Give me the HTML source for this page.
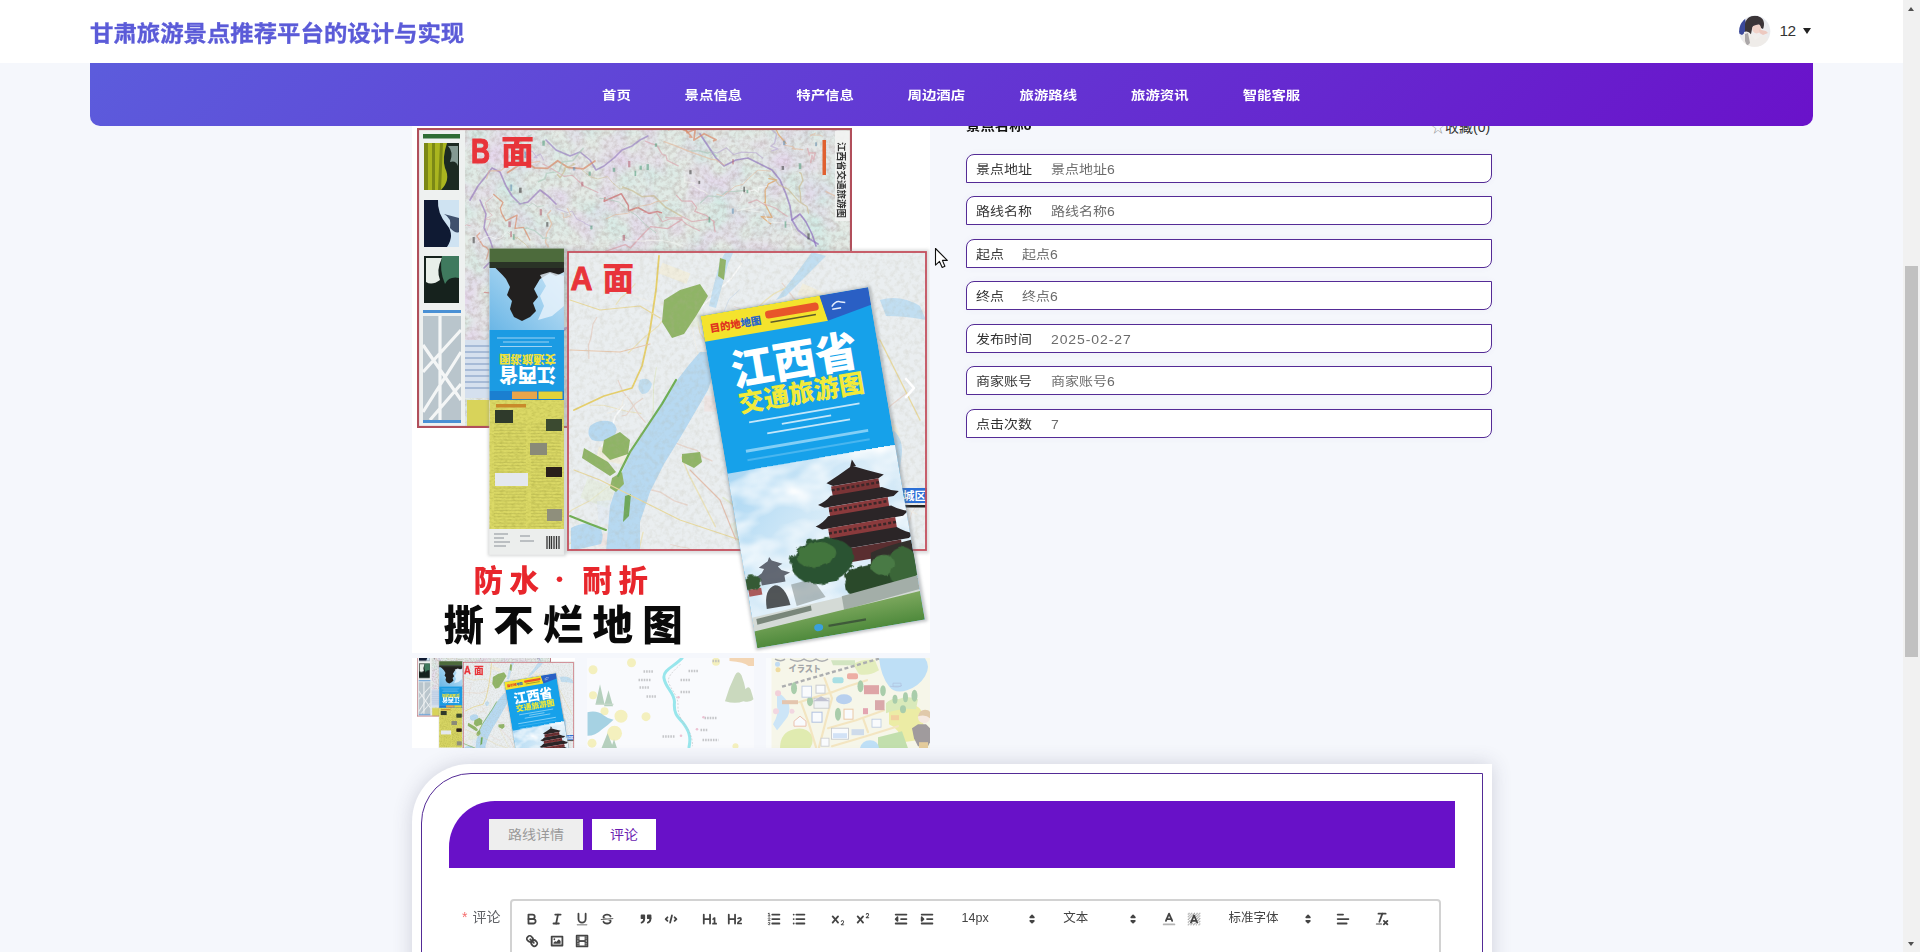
<!DOCTYPE html>
<html lang="zh-CN">
<head>
<meta charset="utf-8">
<title>甘肃旅游景点推荐平台的设计与实现</title>
<style>
*{box-sizing:border-box;margin:0;padding:0}
html,body{width:1920px;height:952px;overflow:hidden;background:#f5f7fc}
body{font-family:"Liberation Sans","Noto Sans CJK SC",sans-serif;font-size:14px;color:#333;position:relative}
#app{position:absolute;left:0;top:0;width:1920px;height:952px;overflow:hidden;background:#f5f7fc}
.abs{position:absolute}
/* header */
#head{position:absolute;left:0;top:0;width:1903px;height:63px;background:#fff;z-index:30}
#title{position:absolute;left:90px;top:15.2px;height:36px;line-height:36px;font-size:23.4px;font-weight:700;color:#5b5bd8;white-space:nowrap;letter-spacing:0;transform:scaleY(.94);transform-origin:50% 50%;-webkit-text-stroke:.35px #5b5bd8}
#user{position:absolute;left:1739px;top:15.3px;height:32px}
#uname{position:absolute;left:1779.5px;top:19.6px;font-size:15.4px;line-height:22px;color:#333;letter-spacing:-.6px}
#caret{position:absolute;left:1802.6px;top:28px;width:0;height:0;border-left:4.4px solid transparent;border-right:4.4px solid transparent;border-top:6.6px solid #222}
/* nav */
#nav{position:absolute;left:90px;top:63px;width:1723px;height:63px;border-radius:0 0 10px 10px;background:linear-gradient(135deg,#5c5cdc 0%,#6a12ca 100%);z-index:20}
#nav span{position:absolute;top:1.9px;height:63px;line-height:63px;color:#fff;font-size:14.4px;font-weight:700;white-space:nowrap;transform:scaleY(.86);transform-origin:50% 50%}
/* info */
.row{position:absolute;left:966px;width:526px;height:29px;border:1px solid #542b96;border-radius:8px 0 8px 0;background:#fff;line-height:27px;font-size:14px;white-space:nowrap;box-shadow:0 0 6px rgba(120,100,180,.06)}
.row b{font-weight:400;color:#333;position:absolute;left:9px;top:.8px;transform:scaleY(.89)}
.row i{font-style:normal;color:#6b6b6b;position:absolute;top:.8px;margin-left:-1px;transform:scaleY(.89)}
/* panel */
#panel{position:absolute;left:412px;top:764px;width:1080px;height:260px;background:#fff;border-radius:58px 0 0 0;box-shadow:0 0 20px rgba(60,60,90,.2)}
#pin{position:absolute;left:9px;top:9px;width:1062px;height:260px;border:1px solid #542b96;border-radius:50px 0 0 0}
#band{position:absolute;left:449px;top:801px;width:1006px;height:67px;background:#6811c8;border-radius:46px 0 0 0}
.tab{position:absolute;top:819px;height:31px;line-height:31px;text-align:center;font-size:14px}
.tab span{display:inline-block;transform:scaleY(.9)}
</style>
</head>
<body>
<div id="app">

<div id="head">
  <div id="title">甘肃旅游景点推荐平台的设计与实现</div>
  <svg id="user" width="32" height="32" viewBox="0 0 32 32">
    <defs><clipPath id="avc"><circle cx="15.7" cy="16.2" r="15.6"/></clipPath>
    <radialGradient id="avg" cx="50%" cy="75%" r="75%"><stop offset="0" stop-color="#f3efec"/><stop offset="1" stop-color="#e6e9ef"/></radialGradient>
    <filter id="avb" x="-20%" y="-20%" width="140%" height="140%"><feGaussianBlur stdDeviation="0.7"/></filter></defs>
    <g clip-path="url(#avc)">
      <rect width="32" height="32" fill="url(#avg)"/>
      <g filter="url(#avb)">
      <path d="M-1 8 L6 3 L8 16 L3 20 L-1 18Z" fill="#3b489a"/>
      <path d="M6 10 C6 2 15 -1 21 2 C25 4 26 9 24 14 L22 13 L20 9 C17 8 14 10 13 14 L12 19 L9 21 L6 18Z" fill="#3a3439"/>
      <path d="M5 17 C9 15 12 19 14 22 L16 25 L22 21 L28 22 L30 32 L4 32 Z" fill="#efece9"/>
      <ellipse cx="17.6" cy="13.6" rx="4.4" ry="4.8" fill="#f1d3ca"/>
      <path d="M12.5 12 C14 7 19 6.500 23 9.500 C20 9 16 10 12.500 12Z" fill="#3d363b"/>
      <path d="M20 14.500 L27 16 L29 18 L24 20 L20.500 18Z" fill="#edc9c0"/>
      <path d="M6 19 L9 18 L11 28 L8 31 L6 26Z" fill="#8e8a8c" opacity=".7"/>
      </g>
    </g>
  </svg>
  <div id="uname">12</div>
  <div id="caret"></div>
</div>

<div id="nav">
  <span style="left:512px">首页</span>
  <span style="left:594.6px">景点信息</span>
  <span style="left:706.3px">特产信息</span>
  <span style="left:817.5px">周边酒店</span>
  <span style="left:929.5px">旅游路线</span>
  <span style="left:1041px">旅游资讯</span>
  <span style="left:1152.7px">智能客服</span>
</div>

<svg class="abs" style="left:412px;top:110px;z-index:1" width="518" height="543" viewBox="412 110 518 543">
<g id="mimg">
<defs>
<filter id="mtexB" x="0" y="0" width="100%" height="100%" color-interpolation-filters="sRGB"><feTurbulence type="fractalNoise" baseFrequency="0.22" numOctaves="3" seed="5"/><feColorMatrix type="matrix" values="0 0 0 0 0.60  0 0 0 0 0.52  0 0 0 0 0.50  1.6 0 0 0 -0.62"/></filter>
<filter id="mtexB2" x="0" y="0" width="100%" height="100%" color-interpolation-filters="sRGB"><feTurbulence type="fractalNoise" baseFrequency="0.035" numOctaves="2" seed="11"/><feColorMatrix type="matrix" values="0 0 0 0 0.90  0 0 0 0 0.85  0 0 0 0 0.93  0 2.2 0 0 -0.9"/></filter>
<filter id="mtexG" x="0" y="0" width="100%" height="100%" color-interpolation-filters="sRGB"><feTurbulence type="fractalNoise" baseFrequency="0.03" numOctaves="2" seed="23"/><feColorMatrix type="matrix" values="0 0 0 0 0.83  0 0 0 0 0.92  0 0 0 0 0.90  0 0 2.4 0 -0.95"/></filter>
<filter id="mtexA" x="0" y="0" width="100%" height="100%" color-interpolation-filters="sRGB"><feTurbulence type="fractalNoise" baseFrequency="0.2" numOctaves="3" seed="9"/><feColorMatrix type="matrix" values="0 0 0 0 0.70  0 0 0 0 0.68  0 0 0 0 0.60  1.5 0 0 0 -0.62"/></filter>
<filter id="mtexY" x="0" y="0" width="100%" height="100%" color-interpolation-filters="sRGB"><feTurbulence type="fractalNoise" baseFrequency="0.25 0.5" numOctaves="2" seed="4"/><feColorMatrix type="matrix" values="0 0 0 0 0.45  0 0 0 0 0.45  0 0 0 0 0.1  1.4 0 0 0 -0.55"/></filter>
<filter id="mcloud" x="0" y="0" width="100%" height="100%" color-interpolation-filters="sRGB"><feTurbulence type="fractalNoise" baseFrequency="0.02 0.035" numOctaves="3" seed="8"/><feColorMatrix type="matrix" values="0 0 0 0 1  0 0 0 0 1  0 0 0 0 1  2.6 0 0 0 -1.0"/></filter>
<filter id="mtree" x="-10%" y="-10%" width="120%" height="120%"><feTurbulence type="fractalNoise" baseFrequency="0.12" numOctaves="2" seed="3" result="n"/><feDisplacementMap in="SourceGraphic" in2="n" scale="7"/></filter>
<filter id="mblur1"><feGaussianBlur stdDeviation="0.6"/></filter>
<filter id="mblur2"><feGaussianBlur stdDeviation="1.6"/></filter>
<linearGradient id="msky" x1="0" y1="0" x2="1" y2="1"><stop offset="0" stop-color="#a9d6f3"/><stop offset="0.45" stop-color="#d9ecf8"/><stop offset="1" stop-color="#c3e0f4"/></linearGradient>
<linearGradient id="mbsky" x1="0" y1="1" x2="1" y2="0"><stop offset="0" stop-color="#6ab6e6"/><stop offset="1" stop-color="#cfe8f8"/></linearGradient>
<linearGradient id="mlawn" x1="0" y1="0" x2="0" y2="1"><stop offset="0" stop-color="#7da85e"/><stop offset="1" stop-color="#4f8a3c"/></linearGradient>
<clipPath id="mclipB"><rect x="417" y="128" width="435" height="300"/></clipPath>
<clipPath id="mclipA"><rect x="567" y="251" width="360" height="300"/></clipPath>
<clipPath id="mclipC"><rect x="0" y="0" width="170" height="337"/></clipPath>
</defs>
<rect x="400" y="100" width="540" height="560" fill="#fff"/>
<g clip-path="url(#mclipB)">
<rect x="417" y="128" width="435" height="300" fill="#e6ebe6"/>
<rect x="465" y="130" width="386" height="296" fill="#e4ebe6"/>
<rect x="465" y="130" width="386" height="296" filter="url(#mtexG)"/>
<rect x="465" y="130" width="386" height="296" filter="url(#mtexB2)"/>
<rect x="465" y="130" width="386" height="296" filter="url(#mtexB)" opacity="0.45"/>
<g fill="none" stroke-linejoin="round" stroke-linecap="round" filter="url(#mblur1)">
<polyline points="470,200 478,186 486,176 492,168 500,172 506,186 512,196 520,204 528,202 534,196 540,190 548,196 556,204" stroke="#9a7cbd" stroke-width="1.700" opacity=".7"/>
<polyline points="480,200 486,214 484,228 490,240 494,252 490,262 484,268" stroke="#9a7cbd" stroke-width="1.600" opacity=".7"/>
<polyline points="546,140 556,150 570,156 580,152 590,160 596,170 604,166 614,158 622,150 632,146 640,140 648,136" stroke="#957cc0" stroke-width="1.600" opacity=".65"/>
<polyline points="700,134 708,146 716,158 724,166 736,160 748,158 760,164 772,170 780,180 786,194 790,206 792,220 798,230 808,238 818,244" stroke="#9278bd" stroke-width="1.700" opacity=".7"/>
<polyline points="792,220 800,214 806,222 812,234 816,246" stroke="#8c6bbd" stroke-width="1.6" opacity=".7"/>
<polyline points="689.5,137.1 692.0,137.2 686.5,131.0 682.2,129.3 668.5,125.5 663.1,128.3 668.8,118.2 656.1,120.5 649.8,110.6" stroke="#d98a6a" stroke-width="1.5" opacity=".7"/>
<polyline points="783.2,140.5 786.1,143.4 778.4,134.5 773.6,123.4 772.7,123.2 770.0,120.8 766.6,105.6 765.0,106.7 766.6,97.4" stroke="#e0a060" stroke-width="1.2" opacity=".7"/>
<polyline points="676.5,195.3 681.6,200.8 691.7,201.1 696.7,207.5 694.7,211.4 706.4,215.5 714.4,222.4 713.3,220.5 715.1,231.8" stroke="#d9a0a8" stroke-width="1.2" opacity=".7"/>
<polyline points="682.0,219.5 667.8,228.6 650.6,226.6 644.2,233.0 630.4,248.0 625.2,244.6 604.6,251.7 602.5,255.1 584.1,262.0" stroke="#d9a0a8" stroke-width="1.3" opacity=".7"/>
<polyline points="529.9,240.0 523.5,227.4 515.0,228.4 517.1,215.1 505.7,220.8 501.5,213.1 500.3,208.1 503.0,202.5 493.7,194.5" stroke="#d98a6a" stroke-width="1.3" opacity=".7"/>
<polyline points="594.9,161.0 583.6,168.8 567.6,167.3 557.6,160.7 547.5,168.4 534.8,167.9 527.0,162.7 517.6,165.9 507.7,172.5" stroke="#d98a6a" stroke-width="1.8" opacity=".7"/>
<polyline points="605.0,197.8 604.1,201.3 621.2,193.7 628.4,205.7 628.4,210.7 637.9,207.5 648.8,213.4 657.3,211.5 661.6,212.8" stroke="#c96a6a" stroke-width="1.5" opacity=".7"/>
<polyline points="713.6,140.8 716.1,139.8 704.1,133.7 693.9,140.1 695.2,129.2 687.1,132.8 684.7,125.7 671.5,122.7 668.7,129.6" stroke="#d98a6a" stroke-width="1.7" opacity=".7"/>
<polyline points="768.8,178.7 776.8,179.8 768.5,183.8 765.1,190.3 765.5,204.2 764.3,202.5 772.1,217.5 761.2,216.6 770.7,223.7" stroke="#e0a060" stroke-width="1.3" opacity=".7"/>
<polyline points="484.3,292.4 496.8,293.8 504.1,297.0 501.4,300.7 508.8,298.4 515.7,304.9 520.7,310.8" stroke="#c96a6a" stroke-width="1.4" opacity=".6"/>
<polyline points="522.8,339.1 518.8,338.1 522.9,341.7 516.6,341.8 513.0,342.4 511.2,334.7 507.4,337.6" stroke="#9a70bd" stroke-width="1.4" opacity=".6"/>
<polyline points="561.7,360.2 558.9,358.2 562.3,368.4 560.6,369.7 557.5,368.9 559.9,371.1 564.7,377.1" stroke="#d98a6a" stroke-width="1.4" opacity=".6"/>
<polyline points="486.5,258.9 489.2,249.5 488.5,250.2 486.5,247.3 483.0,245.8 476.8,235.9 479.8,233.1" stroke="#d98a6a" stroke-width="1.4" opacity=".6"/>
<polyline points="551.2,342.3 555.9,338.9 557.8,337.1 562.9,331.5 568.5,326.8 562.4,329.0 574.5,327.0" stroke="#9a70bd" stroke-width="1.4" opacity=".6"/>
<polyline points="505.0,407.7 505.4,402.3 507.8,396.5 508.7,396.2 499.4,395.3 500.1,394.5 504.2,383.7" stroke="#d98a6a" stroke-width="1.4" opacity=".6"/>
</g>
<g fill="none" stroke-linejoin="round" stroke-linecap="round" opacity=".6">
<polyline points="740.1,197.5 743.3,191.0 749.6,191.0 754.9,189.8 758.0,192.4 758.5,187.8 766.5,186.5" stroke="#ffffff" stroke-width="1.1"/>
<polyline points="548.5,246.8 545.5,242.7 546.5,233.7 549.7,228.2 551.7,223.6 547.3,214.6 550.6,210.7" stroke="#e3b79a" stroke-width="1.4"/>
<polyline points="523.4,148.4 525.8,154.8 532.1,151.0 537.2,157.8 534.1,157.4 540.4,154.1 543.5,160.0" stroke="#b7a6d0" stroke-width="1.1"/>
<polyline points="826.0,191.6 835.6,196.1 850.6,198.6 859.2,208.8 862.5,208.3 876.2,220.0 884.5,223.5" stroke="#e3b79a" stroke-width="1.3"/>
<polyline points="509.2,233.5 516.9,238.6 517.0,237.4 526.5,245.2 530.5,251.1 534.9,249.3 538.2,250.7" stroke="#c9b88a" stroke-width="0.9"/>
<polyline points="622.6,187.0 632.7,190.9 641.9,196.7 653.8,195.8 665.4,207.1 670.0,209.6 681.6,216.3" stroke="#c9b88a" stroke-width="1.5"/>
<polyline points="745.9,190.3 735.0,191.4 726.2,191.6 720.4,197.0 714.7,196.5 708.1,195.9 700.6,202.8" stroke="#a8c8b8" stroke-width="1.2"/>
<polyline points="688.3,151.2 697.3,150.7 696.9,150.2 707.7,153.1 712.6,151.3 716.3,156.3 716.9,155.9" stroke="#a8c8b8" stroke-width="1.4"/>
<polyline points="800.8,202.0 800.2,192.3 799.0,187.0 800.9,184.1 802.9,180.5 801.2,173.6 799.7,172.7" stroke="#c9b88a" stroke-width="1.4"/>
<polyline points="770.7,171.1 757.9,170.1 748.5,178.5 743.0,184.4 735.0,186.4 723.3,196.1 716.8,194.2" stroke="#e3b79a" stroke-width="0.9"/>
<polyline points="645.4,141.2 651.3,143.6 656.6,145.2 662.4,154.7 665.9,155.4 667.2,160.3 678.2,165.9" stroke="#d9a0a8" stroke-width="1.3"/>
<polyline points="807.6,148.6 809.3,155.0 809.6,152.7 815.2,153.0 813.5,159.8 812.0,155.4 810.7,162.6" stroke="#d9a0a8" stroke-width="1.5"/>
<polyline points="737.6,210.5 744.3,208.9 753.3,207.5 751.5,204.8 754.5,207.6 762.7,203.5 767.1,204.6" stroke="#f4f6f2" stroke-width="1.3"/>
<polyline points="622.7,188.5 620.0,189.1 612.2,182.4 607.5,176.5 597.9,179.0 590.2,176.7 581.5,169.5" stroke="#c9b88a" stroke-width="0.8"/>
<polyline points="667.4,200.6 656.3,201.6 650.0,204.5 639.5,206.3 627.7,213.4 615.3,214.7 606.3,218.8" stroke="#e3b79a" stroke-width="1.0"/>
<polyline points="793.1,233.8 790.5,223.4 782.1,222.9 768.2,222.0 764.2,212.5 750.2,210.6 742.9,209.0" stroke="#f4f6f2" stroke-width="1.1"/>
<polyline points="665.7,217.5 671.2,217.9 681.8,217.8 682.3,216.7 692.0,221.7 703.9,219.9 709.2,219.0" stroke="#d9a0a8" stroke-width="1.3"/>
<polyline points="762.8,158.2 756.1,152.8 741.8,152.1 733.5,154.5 726.5,147.8 717.2,153.0 711.2,151.6" stroke="#b7a6d0" stroke-width="1.1"/>
<polyline points="784.2,141.7 783.9,139.1 784.9,145.3 793.1,146.8 795.4,149.4 792.2,148.4 802.7,149.6" stroke="#e3b79a" stroke-width="1.1"/>
<polyline points="591.7,226.6 584.4,223.3 584.5,222.6 576.6,218.9 571.9,211.0 567.6,212.5 556.8,208.7" stroke="#b7a6d0" stroke-width="0.9"/>
<polyline points="538.3,181.8 544.8,178.8 546.5,173.4 559.0,171.4 562.4,162.0 572.7,160.8 583.2,148.2" stroke="#a8c8b8" stroke-width="1.4"/>
<polyline points="664.0,141.6 675.2,145.6 689.4,151.5 699.7,155.1 710.9,159.2 715.7,159.6 724.2,165.0" stroke="#e3b79a" stroke-width="1.4"/>
<polyline points="771.8,150.9 777.8,148.9 770.8,146.0 774.6,143.3 776.6,134.0 770.9,129.0 773.8,128.4" stroke="#b7a6d0" stroke-width="1.4"/>
<polyline points="531.4,134.7 523.7,139.1 520.5,142.0 523.6,150.9 519.1,152.1 518.5,164.9 516.6,166.3" stroke="#a8c8b8" stroke-width="1.1"/>
<polyline points="618.9,237.3 629.2,240.6 644.7,241.1 648.2,240.1 663.1,240.7 673.7,242.8 682.8,246.2" stroke="#f4f6f2" stroke-width="1.1"/>
<polyline points="539.4,161.4 527.7,163.2 520.5,164.7 507.4,165.3 500.9,170.5 488.9,171.0 486.6,178.7" stroke="#e3b79a" stroke-width="1.3"/>
<polyline points="492.7,196.7 485.2,202.8 488.0,211.4 492.4,215.3 485.2,219.0 490.8,220.0 487.1,230.2" stroke="#d9a0a8" stroke-width="0.8"/>
<polyline points="655.7,232.6 645.5,224.9 636.0,215.0 628.1,210.4 619.4,202.2 606.0,198.7 599.8,198.5" stroke="#a8c8b8" stroke-width="1.0"/>
<polyline points="513.7,236.1 506.9,231.6 501.0,237.8 496.9,239.0 489.1,236.1 485.2,237.5 478.0,241.7" stroke="#ffffff" stroke-width="0.9"/>
<polyline points="707.2,194.1 704.5,191.6 700.4,190.2 692.6,185.1 695.0,183.2 684.5,181.6 684.9,175.0" stroke="#f4f6f2" stroke-width="1.3"/>
<polyline points="557.4,174.6 560.3,177.7 563.6,172.3 565.1,168.8 564.4,168.1 574.9,164.4 573.3,163.7" stroke="#c9b88a" stroke-width="1.5"/>
<polyline points="810.0,135.5 813.1,134.4 810.4,136.0 815.5,132.9 813.4,135.3 819.8,135.0 822.4,136.3" stroke="#e3b79a" stroke-width="0.9"/>
<polyline points="542.8,163.9 550.6,168.0 564.2,176.4 572.4,175.3 583.8,186.0 586.5,187.2 597.9,192.4" stroke="#d9a0a8" stroke-width="1.1"/>
<polyline points="524.1,228.7 527.2,228.0 529.6,229.0 534.8,230.7 542.1,236.8 542.4,238.3 547.9,237.8" stroke="#a8c8b8" stroke-width="1.3"/>
<polyline points="470.2,225.7 466.5,224.8 461.7,229.1 455.9,229.3 454.9,232.3 454.6,233.6 445.2,239.4" stroke="#d9a0a8" stroke-width="1.0"/>
<polyline points="787.2,216.2 784.7,214.7 775.5,208.1 767.3,205.0 765.2,205.0 756.5,199.8 748.7,202.8" stroke="#d9a0a8" stroke-width="1.3"/>
<polyline points="543.7,205.7 537.4,206.9 532.7,203.4 528.6,206.0 520.3,202.7 514.5,202.0 510.1,201.6" stroke="#a8c8b8" stroke-width="0.8"/>
<polyline points="699.4,230.7 686.3,224.2 681.1,219.4 670.5,218.6 662.4,221.7 656.0,212.1 643.7,212.5" stroke="#d9a0a8" stroke-width="1.2"/>
<polyline points="561.0,213.1 563.1,213.1 563.5,218.1 569.0,216.4 570.7,215.1 567.1,208.1 568.7,210.3" stroke="#e3b79a" stroke-width="0.9"/>
<polyline points="808.5,213.1 807.0,206.6 798.8,201.4 788.0,189.1 778.6,184.8 775.3,179.5 769.4,175.8" stroke="#c9b88a" stroke-width="1.2"/>
</g>
<rect x="524.3" y="151.6" width="1.9" height="6.3" fill="#5a8ab0" opacity=".55"/>
<rect x="815.2" y="142.3" width="1.7" height="3.9" fill="#5a8ab0" opacity=".55"/>
<rect x="508.3" y="221.5" width="2.5" height="5.6" fill="#b05a6a" opacity=".55"/>
<rect x="798.8" y="163.3" width="2.5" height="5.8" fill="#4d9a78" opacity=".55"/>
<rect x="783.1" y="140.7" width="2.3" height="4.4" fill="#5a8ab0" opacity=".55"/>
<rect x="708.5" y="216.7" width="1.8" height="5.8" fill="#4d9a78" opacity=".55"/>
<rect x="510.2" y="231.3" width="1.7" height="5.9" fill="#b05a6a" opacity=".55"/>
<rect x="634.5" y="170.7" width="1.7" height="5.3" fill="#4d9a78" opacity=".55"/>
<rect x="612.7" y="167.8" width="2.5" height="4.0" fill="#4d9a78" opacity=".55"/>
<rect x="698.4" y="180.8" width="1.8" height="3.1" fill="#333" opacity=".55"/>
<rect x="781.6" y="166.0" width="2.5" height="3.9" fill="#333" opacity=".55"/>
<rect x="510.3" y="184.5" width="1.9" height="6.4" fill="#5a8ab0" opacity=".55"/>
<rect x="512.8" y="234.2" width="1.8" height="5.5" fill="#4d9a78" opacity=".55"/>
<rect x="472.6" y="237.0" width="2.2" height="6.3" fill="#333" opacity=".55"/>
<rect x="732.2" y="159.1" width="1.6" height="5.3" fill="#b05a6a" opacity=".55"/>
<rect x="588.6" y="171.6" width="2.2" height="4.1" fill="#4d9a78" opacity=".55"/>
<rect x="581.2" y="181.7" width="2.2" height="4.9" fill="#b05a6a" opacity=".55"/>
<rect x="539.7" y="209.1" width="2.2" height="6.2" fill="#b05a6a" opacity=".55"/>
<rect x="689.3" y="170.2" width="2.3" height="4.1" fill="#333" opacity=".55"/>
<rect x="546.2" y="222.1" width="2.2" height="4.6" fill="#333" opacity=".55"/>
<rect x="628.1" y="160.9" width="2.3" height="6.4" fill="#b05a6a" opacity=".55"/>
<rect x="731.8" y="208.5" width="2.0" height="5.2" fill="#5a8ab0" opacity=".55"/>
<rect x="590.3" y="225.6" width="2.2" height="3.8" fill="#4d9a78" opacity=".55"/>
<rect x="542.3" y="140.6" width="2.5" height="5.1" fill="#4d9a78" opacity=".55"/>
<rect x="743.3" y="186.7" width="1.7" height="5.4" fill="#333" opacity=".55"/>
<rect x="646.5" y="164.1" width="2.4" height="6.0" fill="#4d9a78" opacity=".55"/>
<rect x="784.6" y="221.3" width="1.7" height="6.4" fill="#4d9a78" opacity=".55"/>
<rect x="654.8" y="143.4" width="2.4" height="3.4" fill="#4d9a78" opacity=".55"/>
<rect x="519.1" y="187.7" width="2.5" height="5.1" fill="#333" opacity=".55"/>
<rect x="807.4" y="233.4" width="2.3" height="6.1" fill="#333" opacity=".55"/>
<rect x="622.6" y="235.0" width="2.4" height="5.6" fill="#b05a6a" opacity=".55"/>
<rect x="639.6" y="165.7" width="2.3" height="4.0" fill="#4d9a78" opacity=".55"/>
<rect x="746.5" y="189.9" width="1.8" height="3.3" fill="#4d9a78" opacity=".55"/>
<rect x="572.9" y="167.1" width="2.4" height="3.3" fill="#5a8ab0" opacity=".55"/>
<rect x="419" y="130" width="46" height="296" fill="#eef1f0"/>
<rect x="423" y="134" width="37" height="4.5" fill="#2f6d35"/>
<rect x="424" y="143" width="35" height="47" fill="#aab51f"/>
<path d="M424 143h4v47h-4z M432 143h3v47h-3z M440 143h3l-2 47h-3z" fill="#6f7d14" opacity=".8"/>
<path d="M447 143h12v47h-18 q10 -10 4 -22 q-3 -10 2 -25z" fill="#1c2a22"/>
<path d="M448 146 q6 6 2 16 q6 -2 8 4 v-20z" fill="#9fb6b0" opacity=".8"/>
<rect x="424" y="200" width="35" height="47" fill="#0f1a33"/>
<path d="M438 200h21v47h-12q8 -12 0 -22q-10 -12 -9 -25z" fill="#cfe3f2"/>
<path d="M444 214q8 4 6 14q6 6 9 4v-14z" fill="#1a2a4a" opacity=".8"/>
<rect x="424" y="256" width="35" height="47" fill="#16221d"/>
<path d="M426 258h16q-6 12 -2 22q-8 6 -14 2z" fill="#e8efe9"/>
<path d="M442 256h17v22q-10 -2 -14 6q-6 -14 -3 -28z" fill="#3f7a5e"/>
<rect x="423" y="310" width="38" height="3" fill="#4a90d4"/>
<rect x="423" y="316" width="38" height="104" fill="#b9c5cc"/>
<path d="M423 372 L461 330 M423 412 L461 352 M430 420 L461 384 M423 345 L461 400 M440 316 L440 420" stroke="#f4f6f6" stroke-width="3.2" fill="none"/>
<rect x="423" y="420" width="38" height="3" fill="#4a90d4"/>
<rect x="465" y="340" width="25" height="58" fill="#d5e0ee"/>
<path d="M465 346h25M465 352h25M465 358h25M465 364h25M465 370h25M465 376h25M465 382h25M465 388h25" stroke="#7f9ac4" stroke-width="1.6" opacity=".7"/>
<rect x="467" y="400" width="22" height="26" fill="#d8d35a"/>
<rect x="835" y="131" width="15.500" height="90" fill="#f2f3f2" opacity=".92"/>
<rect x="822.500" y="140" width="3.500" height="35" fill="#e0602f"/>
<text transform="translate(838,142) rotate(90)" font-family="'Liberation Sans','Noto Sans CJK SC',sans-serif" font-weight="700" font-size="9.5" fill="#333" textLength="76" lengthAdjust="spacingAndGlyphs">江西省交通旅游图</text>
<rect x="418" y="129" width="433" height="298" fill="none" stroke="#b14f5b" stroke-width="2.2"/>
</g>
<text x="471" y="163.200" font-family="'Liberation Sans','Noto Sans CJK SC',sans-serif" font-weight="700" font-size="35" fill="#e8343a" stroke="#e8343a" stroke-width="1.200" textLength="19" lengthAdjust="spacingAndGlyphs">B</text>
<text x="501" y="163.500" font-family="'Noto Sans CJK SC',sans-serif" font-weight="900" font-size="33" fill="#e8343a">面</text>
<rect x="488" y="247" width="78" height="309" fill="#8a8f90" opacity=".35" filter="url(#mblur2)"/>
<rect x="489.5" y="248.5" width="74.5" height="306" fill="#f3f4f2"/>
<rect x="489.5" y="248.5" width="74.5" height="14" fill="#4d6b3c"/>
<rect x="489.5" y="262" width="74.5" height="68" fill="url(#mbsky)"/>
<path d="M489.5 262 h74.5 v10 l-8 4 l-6 -3 l-10 6 l-6 10 l4 8 l-5 6 l3 8 l-6 6 l-8 4 l-8 -4 l-4 -8 l2 -8 l-5 -6 l3 -8 l-4 -8 l-3.500 -4z" fill="#22201f"/>
<path d="M489.500 262h74.500v6h-74.500z" fill="#2a3326"/>
<path d="M540 275 l10 -3 l14 4 v30 l-12 10 l-14 4 l6 -14 l-4 -10 l6 -10z" fill="#e9f3fb" opacity=".8"/>
<rect x="489.5" y="330" width="74.5" height="61" fill="#1b9be3"/>
<rect x="489.5" y="391" width="74.5" height="9" fill="#1b7fd0"/>
<rect x="512" y="391.500" width="25" height="7.500" fill="#e9a54a"/>
<rect x="538.500" y="391.500" width="24" height="7.500" fill="#e4d23a"/>
<rect x="489.5" y="400" width="74.5" height="129" fill="#dbd966"/>
<rect x="489.5" y="400" width="74.5" height="129" filter="url(#mtexY)" opacity=".3"/>
<rect x="495" y="410" width="18" height="13" fill="#2f3a2b"/>
<rect x="546" y="419" width="16" height="12" fill="#3b4a30"/>
<rect x="530" y="443" width="17" height="12" fill="#8a8a78"/>
<rect x="546" y="467" width="16" height="10" fill="#2a1f1a"/>
<rect x="547" y="509" width="15" height="12" fill="#8f8f7c"/>
<g stroke="#8a8a3a" stroke-width=".8" opacity=".3">
<path d="M494 424.0h32M531 424.0h30"/>
<path d="M494 427.2h32M531 427.2h30"/>
<path d="M494 430.4h32M531 430.4h30"/>
<path d="M494 433.6h32M531 433.6h30"/>
<path d="M494 436.8h32M531 436.8h30"/>
<path d="M494 440.0h32M531 440.0h30"/>
<path d="M494 443.2h32M531 443.2h30"/>
<path d="M494 446.4h32M531 446.4h30"/>
<path d="M494 449.6h32M531 449.6h30"/>
<path d="M494 452.8h32M531 452.8h30"/>
<path d="M494 456.0h32M531 456.0h30"/>
<path d="M494 459.2h32M531 459.2h30"/>
<path d="M494 462.4h32M531 462.4h30"/>
<path d="M494 465.6h32M531 465.6h30"/>
<path d="M494 468.8h32M531 468.8h30"/>
<path d="M494 472.0h32M531 472.0h30"/>
<path d="M494 475.2h32M531 475.2h30"/>
<path d="M494 478.4h32M531 478.4h30"/>
<path d="M494 481.6h32M531 481.6h30"/>
<path d="M494 484.8h32M531 484.8h30"/>
<path d="M494 488.0h32M531 488.0h30"/>
<path d="M494 491.2h32M531 491.2h30"/>
<path d="M494 494.4h32M531 494.4h30"/>
<path d="M494 497.6h32M531 497.6h30"/>
<path d="M494 500.8h32M531 500.8h30"/>
<path d="M494 504.0h32M531 504.0h30"/>
<path d="M494 507.2h32M531 507.2h30"/>
<path d="M494 510.4h32M531 510.4h30"/>
<path d="M494 513.6h32M531 513.6h30"/>
<path d="M494 516.8h32M531 516.8h30"/>
<path d="M494 520.0h32M531 520.0h30"/>
<path d="M494 523.2h32M531 523.2h30"/>
<path d="M494 526.4h32M531 526.4h30"/>
</g>
<rect x="495" y="410" width="18" height="13" fill="#2f3a2b"/>
<rect x="546" y="419" width="16" height="12" fill="#3b4a30"/>
<rect x="530" y="443" width="17" height="12" fill="#8a8a78"/>
<rect x="546" y="467" width="16" height="10" fill="#2a1f1a"/>
<rect x="547" y="509" width="15" height="12" fill="#8f8f7c"/>
<rect x="495" y="473" width="33" height="13" fill="#e4e8ee"/>
<rect x="496" y="404" width="30" height="3.500" fill="#c98a2a"/>
<rect x="489.5" y="529" width="74.5" height="25.500" fill="#eceeed"/>
<path d="M547 536v13M549.500 536v13M551.500 536v13M554 536v13M556.500 536v13M559 536v13" stroke="#333" stroke-width="1.3"/>
<path d="M494 534h14M494 538h10M494 542h16M494 546h12M520 536h10M520 541h14" stroke="#8a9098" stroke-width="1.2"/>
<g transform="rotate(180 527 372.500)" font-family="'Noto Sans CJK SC',sans-serif">
<text x="498" y="377" font-weight="900" font-size="19" fill="#fff" textLength="57" lengthAdjust="spacingAndGlyphs">江西省</text>
<text x="498" y="390" font-family="'Noto Sans CJK SC',sans-serif" font-weight="900" font-size="11.500" fill="#efe23a" textLength="57" lengthAdjust="spacingAndGlyphs">交通旅游图</text>
</g>
<path d="M497 338h58M503 342h46M500 346.500h52" stroke="#bfe2f7" stroke-width="1.2" opacity=".8"/>
<rect x="565" y="249.5" width="364" height="304" fill="#9a9fa0" opacity=".35" filter="url(#mblur2)"/>
<g clip-path="url(#mclipA)">
<rect x="567" y="251" width="360" height="300" fill="#eaeef0"/>
<g fill="none" stroke-linecap="round" stroke-linejoin="round" opacity=".75">
<polyline points="685.4,298.4 668.4,312.0 658.4,326.0 643.1,338.3 628.2,353.0" stroke="#eadfae" stroke-width="1.1"/>
<polyline points="590.1,405.2 603.5,405.3 615.1,408.2 628.1,411.6 641.0,413.4" stroke="#eadfae" stroke-width="0.9"/>
<polyline points="723.0,497.5 734.8,506.1 746.9,512.9 761.8,524.1 777.5,532.3" stroke="#dfe6c4" stroke-width="1.6"/>
<polyline points="772.5,373.6 793.4,376.2 817.2,375.0 835.1,378.2 854.6,382.6" stroke="#e6cfc4" stroke-width="1.1"/>
<polyline points="760.1,421.9 766.5,430.8 766.3,440.6 769.5,448.9 771.9,458.5" stroke="#dfe6c4" stroke-width="1.3"/>
<polyline points="635.1,283.9 632.1,287.4 624.6,294.9 621.6,296.9 616.1,304.4" stroke="#eadfae" stroke-width="1.2"/>
<polyline points="758.4,482.9 752.3,496.7 747.4,509.2 743.3,521.6 740.4,531.1" stroke="#e6cfc4" stroke-width="1.0"/>
<polyline points="634.5,482.5 648.5,489.2 660.8,492.3 674.3,500.9 687.1,505.0" stroke="#e6cfc4" stroke-width="1.4"/>
<polyline points="670.7,544.5 679.9,546.8 687.8,548.1 699.1,553.6 707.6,554.3" stroke="#e6cfc4" stroke-width="0.9"/>
<polyline points="741.4,264.0 730.9,278.9 719.7,288.6 711.4,297.9 697.3,309.9" stroke="#ffffff" stroke-width="1.5"/>
<polyline points="681.6,457.2 688.9,474.8 699.3,494.8 707.7,511.5 715.4,526.7" stroke="#eadfae" stroke-width="1.5"/>
<polyline points="907.0,392.7 890.1,406.1 881.4,417.1 866.2,431.5 851.4,442.9" stroke="#e6cfc4" stroke-width="1.3"/>
<polyline points="923.3,496.6 911.5,512.8 907.4,531.7 897.2,551.7 889.9,571.6" stroke="#e6cfc4" stroke-width="0.8"/>
<polyline points="734.2,306.6 742.7,309.4 750.8,309.1 760.8,311.8 770.5,317.1" stroke="#e6cfc4" stroke-width="0.9"/>
<polyline points="656.4,367.6 653.8,383.6 653.3,395.0 653.3,409.7 652.1,421.8" stroke="#dfe6c4" stroke-width="1.0"/>
<polyline points="618.2,380.7 623.3,392.4 630.6,401.1 638.8,414.6 645.1,422.2" stroke="#e6cfc4" stroke-width="1.3"/>
<polyline points="702.7,324.8 712.5,323.6 726.3,327.9 733.2,328.2 742.0,330.3" stroke="#eadfae" stroke-width="0.8"/>
<polyline points="864.8,309.5 863.4,319.9 863.2,335.5 861.6,346.4 859.9,359.3" stroke="#e6cfc4" stroke-width="1.3"/>
<polyline points="684.1,289.5 686.7,307.8 691.9,325.4 695.0,342.0 698.9,358.5" stroke="#f3efe6" stroke-width="0.8"/>
<polyline points="887.7,485.6 879.1,488.6 866.6,493.7 855.0,496.6 843.9,500.9" stroke="#cddcec" stroke-width="1.1"/>
<polyline points="740.7,373.0 750.2,372.7 759.6,372.9 769.7,377.6 778.4,378.1" stroke="#eadfae" stroke-width="0.9"/>
<polyline points="782.1,283.1 788.3,291.0 795.1,300.0 799.7,303.7 803.6,311.1" stroke="#e6cfc4" stroke-width="1.3"/>
<polyline points="596.8,317.5 593.0,324.0 590.7,338.8 588.5,345.0 588.9,358.4" stroke="#e6cfc4" stroke-width="1.3"/>
<polyline points="739.5,289.9 729.0,299.4 723.5,312.8 717.7,325.9 707.3,336.7" stroke="#cddcec" stroke-width="1.0"/>
<polyline points="621.6,475.7 607.9,486.6 590.2,500.5 572.3,509.7 557.2,522.2" stroke="#eadfae" stroke-width="1.2"/>
<polyline points="643.1,532.1 638.7,550.9 639.1,562.1 638.1,577.3 634.6,595.8" stroke="#eadfae" stroke-width="1.4"/>
<polyline points="673.8,442.4 686.8,447.4 697.1,450.5 703.0,457.0 712.0,460.9" stroke="#e6cfc4" stroke-width="1.5"/>
<polyline points="698.1,322.0 699.8,332.4 705.0,340.5 709.1,354.4 709.5,362.6" stroke="#eadfae" stroke-width="1.3"/>
<polyline points="850.6,478.5 866.8,487.9 885.4,496.7 902.8,507.0 916.8,514.1" stroke="#f3efe6" stroke-width="1.4"/>
<polyline points="642.6,398.4 635.4,403.5 629.9,410.2 626.5,415.0 622.0,416.0" stroke="#e6cfc4" stroke-width="1.2"/>
<polyline points="641.0,432.9 634.5,452.3 623.5,473.9 618.7,495.7 613.8,515.9" stroke="#e6cfc4" stroke-width="1.6"/>
<polyline points="701.1,318.7 708.9,325.3 722.3,328.1 732.5,333.5 744.6,335.4" stroke="#cddcec" stroke-width="1.3"/>
<polyline points="888.4,501.4 884.0,512.4 877.0,519.1 872.6,530.5 866.1,540.4" stroke="#f3efe6" stroke-width="0.9"/>
<polyline points="804.8,520.8 794.1,525.1 779.1,532.1 764.8,540.9 752.4,545.7" stroke="#eadfae" stroke-width="1.1"/>
<polyline points="797.8,280.7 787.1,287.2 773.8,293.9 765.4,300.4 755.0,310.4" stroke="#eadfae" stroke-width="1.4"/>
<polyline points="628.6,293.6 643.3,299.4 657.1,303.5 669.8,305.8 681.3,313.1" stroke="#f3efe6" stroke-width="0.9"/>
<polyline points="860.9,543.5 857.2,543.2 846.1,550.2 840.3,552.4 831.2,553.3" stroke="#dfe6c4" stroke-width="0.9"/>
<polyline points="573.6,541.2 560.8,549.5 548.0,563.1 533.9,576.1 522.4,590.2" stroke="#eadfae" stroke-width="1.1"/>
<polyline points="877.5,496.0 889.1,499.8 899.3,500.5 909.4,502.7 917.5,502.6" stroke="#dfe6c4" stroke-width="1.0"/>
<polyline points="776.4,333.4 775.4,337.1 771.3,345.0 765.7,350.6 764.2,354.2" stroke="#f3efe6" stroke-width="1.1"/>
<polyline points="732.1,423.9 743.1,445.9 751.4,461.7 762.7,482.3 776.4,498.6" stroke="#dfe6c4" stroke-width="0.9"/>
<polyline points="624.3,404.9 614.9,416.8 611.1,432.2 599.9,448.9 594.5,464.4" stroke="#ffffff" stroke-width="1.4"/>
<polyline points="629.3,394.2 623.6,398.5 621.7,405.8 615.1,410.8 607.3,413.2" stroke="#f3efe6" stroke-width="1.2"/>
<polyline points="765.6,486.1 775.5,488.3 777.4,492.3 785.2,494.6 790.1,497.9" stroke="#eadfae" stroke-width="1.0"/>
<polyline points="843.5,401.8 859.6,421.6 873.3,436.3 885.2,450.3 897.7,467.8" stroke="#eadfae" stroke-width="1.2"/>
<polyline points="788.8,400.7 796.2,409.9 799.3,422.9 804.5,428.3 813.3,437.1" stroke="#dfe6c4" stroke-width="1.2"/>
</g>
<rect x="730.4" y="523.5" width="32.5" height="22.5" fill="#e2ecd8" opacity=".6" transform="rotate(-18 730.4 523.5)"/>
<rect x="720.4" y="375.5" width="22.8" height="11.0" fill="#dfe9f4" opacity=".6" transform="rotate(-16 720.4 375.5)"/>
<rect x="598.8" y="446.8" width="31.9" height="12.2" fill="#f3ecd2" opacity=".6" transform="rotate(13 598.8 446.8)"/>
<rect x="789.6" y="298.3" width="33.4" height="13.1" fill="#f0e0dc" opacity=".6" transform="rotate(27 789.6 298.3)"/>
<rect x="704.4" y="395.4" width="17.2" height="16.0" fill="#f0e0dc" opacity=".6" transform="rotate(1 704.4 395.4)"/>
<rect x="685.2" y="313.2" width="15.8" height="15.1" fill="#e2ecd8" opacity=".6" transform="rotate(-10 685.2 313.2)"/>
<rect x="724.1" y="456.3" width="20.6" height="18.7" fill="#dfe9f4" opacity=".6" transform="rotate(1 724.1 456.3)"/>
<rect x="595.9" y="535.8" width="33.4" height="11.5" fill="#f0e0dc" opacity=".6" transform="rotate(-14 595.9 535.8)"/>
<rect x="587.9" y="477.7" width="29.1" height="21.5" fill="#e2ecd8" opacity=".6" transform="rotate(21 587.9 477.7)"/>
<rect x="794.7" y="524.8" width="17.0" height="22.9" fill="#dfe9f4" opacity=".6" transform="rotate(4 794.7 524.8)"/>
<rect x="802.6" y="283.2" width="30.0" height="12.6" fill="#f3ecd2" opacity=".6" transform="rotate(24 802.6 283.2)"/>
<rect x="662.4" y="262.7" width="30.0" height="11.2" fill="#f3ecd2" opacity=".6" transform="rotate(21 662.4 262.7)"/>
<rect x="596.7" y="501.3" width="14.2" height="23.9" fill="#dfe9f4" opacity=".6" transform="rotate(-5 596.7 501.3)"/>
<rect x="872.5" y="433.3" width="24.5" height="13.3" fill="#f3ecd2" opacity=".6" transform="rotate(-23 872.5 433.3)"/>
<g fill="#b7d9f1">
<path d="M726 251 L720 262 L714 284 L709 306 L716 308 L722 286 L728 264 L734 251Z" opacity=".75"/>
<path d="M700 352 L688 366 L668 392 L650 420 L634 446 L620 476 L610 506 L606 551 L640 551 L640 522 L650 492 L664 464 L680 438 L694 414 L708 390 L716 366 L718 352Z"/>
<path d="M590 426 q10 -8 22 -4 q8 6 2 14 q-10 8 -22 4 q-6 -6 -2 -14z"/>
<path d="M571 528 q14 -8 28 -2 q6 8 2 18 l-30 7z"/>
<path d="M826 256 L806 276 L786 296 L776 300 L796 274 L812 252Z" opacity=".8"/>
<path d="M880 300 q20 -6 40 6 l6 14 q-20 -4 -40 -4z" opacity=".8"/>
<path d="M893 430 q12 10 8 30 q-4 20 6 40 l-10 6 q-10 -30 -8 -50z" opacity=".85"/>
<path d="M640 380 q8 -4 12 4 q-2 10 -10 10 q-6 -6 -2 -14z" opacity=".8"/>
</g>
<g fill="#8fb466">
<path d="M664 300 L680 290 L700 284 L708 296 L696 316 L684 334 L672 338 L662 322Z"/>
<path d="M720 258 l6 2 l-2 20 l-6 -4z"/>
<path d="M604 440 l16 -8 l10 8 l-2 14 l-18 6 l-8 -8z"/>
<path d="M584 448 l24 14 l8 10 l-6 4 l-28 -18z"/>
<path d="M682 454 l18 -2 l2 10 l-8 6 l-12 -6z"/>
<path d="M612 478 l10 -6 l2 12 l-8 8 l-6 -4z"/>
<path d="M625 496 l6 -2 l-2 22 l-6 6z" fill="#6fa85a"/>
</g>
<g fill="none" stroke-linecap="round" stroke-linejoin="round">
<path d="M676 380 L662 404 L646 428 L630 452 L618 476" stroke="#6fae52" stroke-width="2.2"/>
<path d="M570 516 L590 524 L606 530" stroke="#6fae52" stroke-width="2"/>
<path d="M659 256 L656 290 L650 330 L642 366 L632 388 L604 396 L574 410" stroke="#e6cf6a" stroke-width="1.8"/>
<path d="M570 300 L600 310 L640 306 L660 318" stroke="#e8d9a0" stroke-width="1.2"/>
<path d="M570 350 L620 352 L650 344" stroke="#e8c9b0" stroke-width="1.2"/>
<path d="M574 470 L600 480 L640 500 L680 520 L740 540" stroke="#e8d9a0" stroke-width="1.2"/>
<path d="M690 470 L720 500 L736 540" stroke="#e3c0b0" stroke-width="1.2"/>
<path d="M880 340 L900 380 L920 420" stroke="#e8d9a0" stroke-width="1.4"/>
</g>
<rect x="567" y="251" width="360" height="300" filter="url(#mtexA)" opacity=".32"/>
<rect x="902" y="488" width="25" height="15" fill="#2b6fd6"/>
<rect x="904" y="505" width="22" height="2.500" fill="#222"/>
<text x="903" y="500" font-family="'Noto Sans CJK SC',sans-serif" font-weight="700" font-size="11.500" fill="#fff">城区</text>
<rect x="568" y="252" width="358" height="298" fill="none" stroke="#c44f5c" stroke-width="1.8"/>
</g>
<text x="570.500" y="290" font-family="'Liberation Sans','Noto Sans CJK SC',sans-serif" font-weight="700" font-size="33.500" fill="#e8343a" stroke="#e8343a" stroke-width="1" textLength="22" lengthAdjust="spacingAndGlyphs">A</text>
<text x="602.500" y="289.500" font-family="'Noto Sans CJK SC',sans-serif" font-weight="900" font-size="31.500" fill="#e8343a">面</text>
<g transform="translate(700.5,316) rotate(-9.7)">
<rect x="-1.5" y="-1" width="174" height="340" fill="#6a7076" opacity=".4" filter="url(#mblur2)"/>
<g clip-path="url(#mclipC)">
<rect x="0" y="0" width="170" height="337" fill="#16a1ea"/>
<path d="M0 0H121L125 26.200H0Z" fill="#f4e32d"/>
<path d="M120.700 0H170V17.700L124.800 26.200Z" fill="#2a5fc4"/>
<path d="M131 13 q5 -6 10 -3 l4 1 M131 15.500 h9" stroke="#e6eefc" stroke-width="1.500" fill="none"/>
<rect x="64" y="6" width="54" height="8" rx="3" fill="#e8552a"/>
<path d="M68 18h46" stroke="#3a3a2a" stroke-width="1.6" opacity=".8"/>
<text x="7" y="18" font-family="'Noto Sans CJK SC',sans-serif" font-weight="900" font-size="10.500" textLength="52" lengthAdjust="spacingAndGlyphs"><tspan fill="#e0341f">目的地</tspan><tspan fill="#2a66c8">地图</tspan></text>
<text x="21" y="75" font-family="'Noto Sans CJK SC',sans-serif" font-weight="900" font-size="43" fill="#fff" textLength="128" lengthAdjust="spacingAndGlyphs">江西省</text>
<text x="23" y="102" font-family="'Noto Sans CJK SC',sans-serif" font-weight="900" font-size="25.500" fill="#f2ea3a" textLength="127" lengthAdjust="spacingAndGlyphs">交通旅游图</text>
<path d="M30 113h112M62 120h50M46 127h84" stroke="#d8effc" stroke-width="1.800" opacity=".9"/>
<path d="M22 141h124" stroke="#8fd4f8" stroke-width="3" opacity=".9"/><path d="M22 150h124" stroke="#4fb8f0" stroke-width="2" opacity=".9"/>
<rect x="0" y="160" width="170" height="177" fill="url(#msky)"/>
<rect x="0" y="160" width="170" height="150" filter="url(#mcloud)" opacity=".9"/>
<g>
<path d="M125 167 l3 7 l-6 0z" fill="#2a2426"/>
<path d="M96 186 q14 -6 28 -13 q14 7 30 14 l-6 3 l-46 0z" fill="#2b2527"/>
<path d="M100 190 h48 v10 h-48z" fill="#7a3436"/>
<path d="M84 206 q8 -2 14 -7 h52 q8 5 16 7 l-6 4 h-70z" fill="#2b2527"/>
<path d="M94 210 h60 v10 h-60z" fill="#8a3a3c"/>
<path d="M78 227 q8 -2 14 -8 h64 q8 6 16 8 l-6 4 h-82z" fill="#2b2527"/>
<path d="M90 231 h68 v11 h-68z" fill="#8a3a3c"/>
<path d="M76 250 q8 -2 14 -9 h68 q8 7 16 9 l-6 4 h-86z" fill="#2b2527"/>
<path d="M90 254 h70 v14 h-70z" fill="#5a2e30"/>
<path d="M100 194 h48 M94 214 h60 M90 236 h68" stroke="#3a2628" stroke-width="2.500" stroke-dasharray="3 2" fill="none"/>
<path d="M128 262 q14 -4 42 -6 v30 h-46z" fill="#33302c"/>
<path d="M132 270 h38 v5 h-38z" fill="#6a6658" opacity=".8"/>
</g>
<path d="M27 249 l2 4 l10 5 l-5 2 l3 4 l8 4 l-6 2 l0 6 l-24 0 l0 -6 l-6 -2 l8 -4 l3 -4 l-5 -2 l10 -5z" fill="#4a4f5a" opacity=".85"/>
<rect x="1" y="278" width="13" height="7" fill="#a44a48" opacity=".9"/>
<path d="M16 300 q0 -20 12 -22 q10 2 12 22z" fill="#3f4345" opacity=".9"/>
<path d="M44 280 l22 -2 l10 20 l-30 4z" fill="#8a9593" opacity=".6"/>
<g filter="url(#mtree)">
<ellipse cx="79" cy="262" rx="32" ry="23" fill="#2c5230"/>
<ellipse cx="74" cy="255" rx="20" ry="12" fill="#43743e"/>
<ellipse cx="122" cy="290" rx="26" ry="17" fill="#294a2b"/>
<ellipse cx="158" cy="282" rx="16" ry="20" fill="#3a6638"/>
<ellipse cx="138" cy="276" rx="12" ry="10" fill="#4a7a45"/>
<ellipse cx="6" cy="272" rx="9" ry="8" fill="#355a35"/>
</g>
<path d="M0 306 L170 296 L170 312 L0 322Z" fill="#d4dad6"/>
<path d="M92 300 L170 292 L170 306 L92 314Z" fill="#a3aea8"/>
<path d="M4 308 L60 304 L60 309 L4 314Z" fill="#5b6a5b" opacity=".75"/>
<path d="M0 320 L170 308 L170 337 L0 337Z" fill="url(#mlawn)"/>
<ellipse cx="64" cy="327" rx="4.500" ry="3.500" fill="#3aa0dc"/>
<path d="M74 327h38" stroke="#3f5a3a" stroke-width="2.200"/>
</g>
</g>
<text y="591" font-family="'Noto Sans CJK SC',sans-serif" font-weight="900" font-size="29.500" fill="#e8262c"><tspan x="473.500">防</tspan><tspan x="509.500">水</tspan><tspan x="549.500" y="586.500" font-size="20">·</tspan><tspan x="582.500" y="591">耐</tspan><tspan x="618.500">折</tspan></text>
<text x="443.500" y="640" font-family="'Noto Sans CJK SC',sans-serif" font-weight="900" font-size="40.500" fill="#0a0a0a" letter-spacing="9.200">撕不烂地图</text>
</g>
</svg>
<svg class="abs" style="left:900.5px;top:376px;z-index:2" width="18" height="24" viewBox="0 0 18 24"><path d="M5 3 L13 12 L5 21" fill="none" stroke="#fff" stroke-width="2.6" stroke-linecap="round" stroke-linejoin="round"/></svg>


<svg class="abs" style="left:412px;top:658px" width="163.3" height="90" viewBox="401.300 238 530 292" preserveAspectRatio="none"><use href="#mimg"/></svg>
<svg class="abs" style="left:586.5px;top:657.8px;opacity:.42" width="167.5" height="90.200" viewBox="586.500 657.800 167.500 90.200">
<rect x="586" y="657" width="169" height="92" fill="#fff"/>
<g fill="#f3e66a">
<circle cx="592.5" cy="669.5" r="4.5"/>
<circle cx="631" cy="662.5" r="4.5"/>
<circle cx="592.5" cy="695" r="4"/>
<circle cx="620.5" cy="716" r="6.5"/>
<circle cx="645.5" cy="716.5" r="4.5"/>
<circle cx="614" cy="733" r="7.5"/>
<circle cx="591.5" cy="743" r="4.5"/>
<circle cx="715.5" cy="661.5" r="4"/>
<circle cx="604" cy="711" r="4"/>
<circle cx="735" cy="746" r="3"/>
</g>
<path d="M587 712 q10 -2 16 3 q5 4 10 4.500 q-6 6 -12 10 q-6 6 -14 6z" fill="#3a9fc0"/>
<path d="M599.500 684 l4.500 20 h-9z M608 690 l4.500 16 h-9z M607 733 l6 15 h-12z M613.500 739 l3 9 h-6z" fill="#5f9c6a"/>
<rect x="595" y="703.500" width="18" height="1.200" fill="#8ab08a"/>
<path d="M681.500 658 C674 666 662 670 663.500 678 C665 688 674 692 674 702 C673 712 676 716 682 722 C688 730 691 736 688.500 747" fill="none" stroke="#18cfd6" stroke-width="3" stroke-linecap="round"/>
<path d="M680 664 C672 672 667 676 668 682 C672 692 678 696 677.500 706 C677 714 682 722 688 730 C692 738 692 742 692 746" fill="none" stroke="#777" stroke-width=".6" stroke-dasharray="2 1.500"/>
<path d="M724.500 701 q4 -14 10 -26 q3 -6 6.500 0 q3 8 4 14 q3 -4 5 0 q2 6 3 10 q-4 4 -10 2 q-8 3 -18.500 0z" fill="#8fb06a"/>
<path d="M729 657.800 h25 v8 h-6 q-4 -4 -19 -5z" fill="#f0a850"/>
<g stroke="#666" stroke-width="2.400" stroke-dasharray="1.600 1" fill="none" opacity=".8">
<path d="M643 671.3h10"/>
<path d="M638 679.8h13"/>
<path d="M639 687.3h10"/>
<path d="M646 696.3h10"/>
<path d="M688 670.8h10"/>
<path d="M680 679.8h10"/>
<path d="M680 691.8h10"/>
<path d="M704 717.8h13"/>
<path d="M700 729.8h7"/>
<path d="M662 736.3h13"/>
<path d="M702 739.8h16"/>
<path d="M712 660.8h7"/>
</g>
<g fill="#e07a9a">
<circle cx="678" cy="697" r="1.300"/>
<circle cx="703" cy="717" r="1.300"/>
<circle cx="696.5" cy="729" r="1.300"/>
<circle cx="680.5" cy="735.5" r="1.300"/>
</g>
</svg>
<svg class="abs" style="left:766px;top:657.8px;opacity:.45" width="164" height="90.200" viewBox="766 657.800 164 90.200">
<rect x="765" y="657" width="166" height="92" fill="#fff"/>
<rect x="771.500" y="657.800" width="158.500" height="90.200" fill="#f8f3d2"/>
<path d="M879 658 h46 q6 8 0 18 q-6 10 -18 14 q-12 4 -18 -4 q-8 -10 -10 -28z" fill="#7cc0f0"/>
<path d="M777 692 q8 4 12 12 q2 10 -4 16 q-6 8 -8 10 l-4 -6 q6 -10 4 -18z" fill="#9ccff2"/>
<path d="M780 748 q0 -16 14 -19 q12 -3 18 6 q2 8 -2 13z" fill="#c8dc55"/>
<path d="M889 712 q8 -10 22 -8 q12 2 12 14 q2 14 -6 22 l-14 2 q-4 -14 -14 -18z" fill="#e2de3c"/>
<path d="M878 737 l24 -6 l6 17 h-30z" fill="#86c24e"/>
<path d="M886 703 q6 -6 12 -4 q10 -4 20 0 l-2 10 q-14 -2 -30 4z" fill="#b9d96a"/>
<path d="M853 664 q10 -6 22 -4 l4 10 q-10 6 -20 4z" fill="#cfe070"/>
<path d="M831 660 h24 v5 h-22z" fill="#a9cf7a"/>
<path d="M860 748 q2 -8 10 -8 q8 0 9 8z" fill="#7cc0f0"/>
<g fill="none" stroke="#f2cf7a" stroke-width="2.200" stroke-linecap="round">
<path d="M824.500 678 L832 698 L826 720 L819 747"/>
<path d="M801 702 L809 724 L816 747"/>
<path d="M832 692 L848 686 L867 680"/>
<path d="M799 702 L818 696 L832 692"/>
<path d="M828 728 L856 720 L884 710"/>
<path d="M832 746 L866 736 L898 726"/>
<path d="M863 718 L868 732"/>
</g>
<path d="M782 686.500 L879 658.500" stroke="#555" stroke-width="2.400" stroke-dasharray="4 2.500" fill="none"/>
<path d="M775 659 q6 3 10 0 M790 659 q8 4 14 0 q6 4 12 0 q6 4 12 0" stroke="#555" stroke-width="1.500" fill="none"/>
<text x="788.500" y="671.500" font-family="'Noto Sans CJK JP','Noto Sans CJK SC',sans-serif" font-weight="900" font-size="9" fill="#444" textLength="32.500" lengthAdjust="spacingAndGlyphs">イラスト</text>
<rect x="832.500" y="677" width="11" height="6" rx="2" fill="#4cc0c8"/>
<rect x="847" y="673" width="11" height="6" rx="2" fill="#e4553a"/>
<g fill="#4f9a4a">
<ellipse cx="794" cy="688" rx="3" ry="6"/>
<ellipse cx="860.5" cy="686" rx="3" ry="6"/>
<ellipse cx="883" cy="690.5" rx="2.8" ry="5.5"/>
<ellipse cx="838" cy="714" rx="3" ry="6.5"/>
<ellipse cx="914.5" cy="695.5" rx="3" ry="6"/>
<ellipse cx="905.5" cy="697" rx="2.5" ry="5"/>
<ellipse cx="810" cy="701" rx="3" ry="5"/>
<ellipse cx="895" cy="699" rx="2.5" ry="4.5"/>
<ellipse cx="903" cy="709" rx="3" ry="4"/>
</g>
<g>
<rect x="802" y="686" width="9.500" height="11" fill="#fff" stroke="#8aa0c8" stroke-width="1"/>
<rect x="816" y="685" width="9" height="8" fill="#fff" stroke="#999" stroke-width="1"/>
<rect x="814" y="698" width="15" height="10" fill="#eee" stroke="#888" stroke-width=".800"/>
<path d="M813 701 l8 -5 l9 5z" fill="#8080a0"/>
<rect x="864" y="685" width="15" height="9" fill="#c44040"/>
<rect x="875" y="700" width="9.500" height="10" fill="#b84848"/>
<rect x="863" y="708" width="5" height="6" fill="#d04058"/>
<rect x="812" y="712" width="10" height="10" fill="#fff" stroke="#6080c0" stroke-width="1"/>
<rect x="844" y="709" width="9" height="10" fill="#fff" stroke="#e09040" stroke-width="1"/>
<path d="M794 721 l6 -5 l6 5 v5 h-12z" fill="#fff" stroke="#e08050" stroke-width="1"/>
<rect x="831.500" y="728" width="17" height="11" fill="#fff" stroke="#888" stroke-width=".800"/>
<rect x="833" y="733" width="14" height="5" fill="#a8c8f0"/>
<rect x="851.500" y="729" width="12.500" height="6" fill="#a0b8d8"/>
<rect x="872" y="719" width="9" height="8" fill="#fff" stroke="#7090c0" stroke-width=".800"/>
<rect x="821" y="738" width="8" height="8" fill="#fff" stroke="#999" stroke-width=".800"/>
<ellipse cx="844" cy="699" rx="8" ry="5" fill="#6f9fe0"/>
<rect x="891" y="715" width="8" height="5" fill="#f0a030"/>
<rect x="782" y="700" width="16" height="4" fill="#d08850"/>
<circle cx="777.500" cy="664" r="2.500" fill="#80b8e8"/><circle cx="778" cy="669.500" r="2.500" fill="#e8b830"/>
<circle cx="778" cy="693" r="3" fill="#f0a0b0"/><circle cx="776" cy="711" r="3" fill="#f0b0c0"/><circle cx="792" cy="711" r="2.500" fill="#f0b0c0"/>
</g>
<path d="M912 728 l6 -4 l8 0 l4 4 v14 l-2 4 h-10 l-4 -8z" fill="#3a2a2a"/>
<circle cx="924" cy="717" r="6" fill="#f6d8c0"/>
<path d="M918 716 q2 -8 10 -6 q4 2 2 8 q-4 -4 -12 -2z" fill="#c89048"/>
<path d="M919 742 h9 v6 h-9z" fill="#d09828"/>
<path d="M890 686 q10 2 12 -1 M893 683 h8 v3 h-8z" stroke="#6088c0" stroke-width=".800" fill="none"/>
</svg>

<div class="abs" style="left:966px;top:115px;font-size:14.4px;font-weight:700;color:#111;line-height:22px;white-space:nowrap;transform:scaleY(.9)">景点名称6</div>
<div class="abs" style="left:1431px;top:116px;font-size:14px;color:#333;line-height:22px;white-space:nowrap"><span style="color:#999">☆</span>收藏(0)</div>

<div class="row" style="top:154px"><b>景点地址</b><i style="left:85px">景点地址6</i></div>
<div class="row" style="top:196px"><b>路线名称</b><i style="left:85px">路线名称6</i></div>
<div class="row" style="top:239px"><b>起点</b><i style="left:56px">起点6</i></div>
<div class="row" style="top:281px"><b>终点</b><i style="left:56px">终点6</i></div>
<div class="row" style="top:324px"><b>发布时间</b><i style="left:85px;letter-spacing:.9px">2025-02-27</i></div>
<div class="row" style="top:366px"><b>商家账号</b><i style="left:85px">商家账号6</i></div>
<div class="row" style="top:409px"><b>点击次数</b><i style="left:85px">7</i></div>

<div id="panel"><div id="pin"></div></div>
<div id="band"></div>
<div class="tab" style="left:489px;width:94px;background:#eee;color:#999"><span>路线详情</span></div>
<div class="tab" style="left:592px;width:64px;background:#fff;color:#6a1bb0"><span>评论</span></div>

<div class="abs" style="left:462px;top:906px;font-size:14px;line-height:22px;color:#606266;white-space:nowrap"><span style="color:#f56c6c;margin-right:5px">*</span>评论</div>

<style>.qs{fill:none;stroke:#444;stroke-linecap:round;stroke-linejoin:round;stroke-width:2}.qf{fill:#444}.qf.qs{fill:#444}.qt{stroke-width:1}.qi{position:absolute;width:16.1px;height:16.1px;overflow:visible}.ql{position:absolute;top:907px;height:22px;line-height:22px;font-size:12.5px;font-weight:400;color:#444;white-space:nowrap;font-family:"Liberation Sans","Noto Sans CJK SC",sans-serif}</style>
<div class="abs" style="left:510px;top:899px;width:931px;height:120px;border:2px solid #d2d2d2;border-radius:4px 4px 0 0;background:#fff"></div>
<svg class="qi" style="left:523.85px;top:911.15px" viewBox="0 0 18 18"><path class="qs" d="M5,4H9.5A2.5,2.5,0,0,1,12,6.5v0A2.5,2.5,0,0,1,9.5,9H5A0,0,0,0,1,5,9V4A0,0,0,0,1,5,4Z"/><path class="qs" d="M5,9h5.5A2.5,2.5,0,0,1,13,11.5v0A2.5,2.5,0,0,1,10.5,14H5a0,0,0,0,1,0,0V9A0,0,0,0,1,5,9Z"/></svg>
<svg class="qi" style="left:548.95px;top:911.15px" viewBox="0 0 18 18"><line class="qs" x1="7" x2="13" y1="4" y2="4"/><line class="qs" x1="5" x2="11" y1="14" y2="14"/><line class="qs" x1="8" x2="10" y1="14" y2="4"/></svg>
<svg class="qi" style="left:574.05px;top:911.15px" viewBox="0 0 18 18"><path class="qs" d="M5,3V9a4.012,4.012,0,0,0,4,4H9a4.012,4.012,0,0,0,4-4V3"/><rect class="qf" height="1" rx="0.5" ry="0.5" width="12" x="3" y="15"/></svg>
<svg class="qi" style="left:599.05px;top:911.15px" viewBox="0 0 18 18"><line class="qs qt" x1="15.5" x2="2.5" y1="8.5" y2="9.5"/><path class="qf" d="M9.007,8C6.542,7.791,6,7.519,6,6.5,6,5.792,7.283,5,9,5c1.571,0,2.765.679,2.969,1.309a1,1,0,0,0,1.9-.617C13.356,4.106,11.354,3,9,3,6.2,3,4,4.538,4,6.5a3.2,3.2,0,0,0,.5,1.843Z"/><path class="qf" d="M8.984,10C11.457,10.208,12,10.479,12,11.5c0,0.708-1.283,1.5-3,1.5-1.571,0-2.765-.679-2.969-1.309a1,1,0,1,0-1.9.617C4.644,13.894,6.646,15,9,15c2.8,0,5-1.538,5-3.5a3.2,3.2,0,0,0-.5-1.843Z"/></svg>
<svg class="qi" style="left:637.75px;top:911.15px" viewBox="0 0 18 18"><rect class="qf qs" height="3" width="3" x="4" y="5"/><rect class="qf qs" height="3" width="3" x="11" y="5"/><path class="qf qs" fill-rule="evenodd" d="M7,8c0,4.031-3,5-3,5"/><path class="qf qs" fill-rule="evenodd" d="M14,8c0,4.031-3,5-3,5"/></svg>
<svg class="qi" style="left:662.85px;top:911.15px" viewBox="0 0 18 18"><polyline class="qs" points="5 7 3 9 5 11"/><polyline class="qs" points="13 7 15 9 13 11"/><line class="qs" x1="10" x2="8" y1="5" y2="13"/></svg>
<svg class="qi" style="left:701.55px;top:911.15px" viewBox="0 0 18 18"><path class="qf" d="M10,4V14a1,1,0,0,1-2,0V10H3v4a1,1,0,0,1-2,0V4A1,1,0,0,1,3,4V8H8V4a1,1,0,0,1,2,0Zm6.06787,9.209H14.98975V7.59863a.54085.54085,0,0,0-.605-.60547h-.62744a1.01119,1.01119,0,0,0-.748.29688L11.645,8.56641a.5435.5435,0,0,0-.022.8584l.28613.30762a.53861.53861,0,0,0,.84717.0332l.09912-.08789a1.2137,1.2137,0,0,0,.2417-.35254h.02246s-.01123.30859-.01123.60547v3.27832H12.0293a.54085.54085,0,0,0-.605.60547v.605a.54085.54085,0,0,0,.605.60547h4.03857a.54085.54085,0,0,0,.605-.60547v-.605A.54085.54085,0,0,0,16.06787,13.209Z"/></svg>
<svg class="qi" style="left:726.65px;top:911.15px" viewBox="0 0 18 18"><path class="qf" d="M16.73975,13.81445v.43945a.54085.54085,0,0,1-.605.60547H11.855a.58392.58392,0,0,1-.64893-.60547V14.0127c0-2.90527,3.39941-3.42187,3.39941-4.55469a.77675.77675,0,0,0-.84717-.78125,1.17684,1.17684,0,0,0-.83594.38477c-.2749.26367-.561.374-.85791.13184l-.4292-.34082c-.30811-.24219-.38525-.51758-.1543-.81445a2.97155,2.97155,0,0,1,2.45361-1.17676,2.45393,2.45393,0,0,1,2.68408,2.40918c0,2.45312-3.1792,2.92676-3.27832,3.93848h2.79443A.54085.54085,0,0,1,16.73975,13.81445ZM9,3A.99974.99974,0,0,0,8,4V8H3V4A1,1,0,0,0,1,4V14a1,1,0,0,0,2,0V10H8v4a1,1,0,0,0,2,0V4A.99974.99974,0,0,0,9,3Z"/></svg>
<svg class="qi" style="left:766.15px;top:911.15px" viewBox="0 0 18 18"><line class="qs" x1="7" x2="15" y1="4" y2="4"/><line class="qs" x1="7" x2="15" y1="9" y2="9"/><line class="qs" x1="7" x2="15" y1="14" y2="14"/><line class="qs qt" x1="2.5" x2="4.5" y1="5.5" y2="5.5"/><path class="qf" d="M3.5,6A0.5,0.5,0,0,1,3,5.5V3.085l-0.276.138A0.5,0.5,0,0,1,2.053,3c-0.124-.247-0.023-0.324.224-0.447l1-.5A0.5,0.5,0,0,1,4,2.5v3A0.5,0.5,0,0,1,3.5,6Z"/><path class="qs qt" d="M4.5,10.5h-2c0-.234,1.85-1.076,1.85-2.234A0.959,0.959,0,0,0,2.5,8.156"/><path class="qs qt" d="M2.5,14.846a0.959,0.959,0,0,0,1.85-.109A0.7,0.7,0,0,0,3.75,14a0.688,0.688,0,0,0,.6-0.736,0.959,0.959,0,0,0-1.85-.109"/></svg>
<svg class="qi" style="left:791.25px;top:911.15px" viewBox="0 0 18 18"><line class="qs" x1="6" x2="15" y1="4" y2="4"/><line class="qs" x1="6" x2="15" y1="9" y2="9"/><line class="qs" x1="6" x2="15" y1="14" y2="14"/><line class="qs" x1="3" x2="3" y1="4" y2="4"/><line class="qs" x1="3" x2="3" y1="9" y2="9"/><line class="qs" x1="3" x2="3" y1="14" y2="14"/></svg>
<svg class="qi" style="left:829.75px;top:911.15px" viewBox="0 0 18 18"><path class="qf" d="M15.5,15H13.861a3.858,3.858,0,0,0,1.914-2.975,1.8,1.8,0,0,0-1.6-1.751A1.921,1.921,0,0,0,12.021,11.7a0.50013,0.50013,0,1,0,.957.291h0a0.914,0.914,0,0,1,1.053-.725,0.81,0.81,0,0,1,.744.762c0,1.076-1.16971,1.86982-1.93971,2.43082A1.45639,1.45639,0,0,0,12,15.5a0.5,0.5,0,0,0,.5.5h3A0.5,0.5,0,0,0,15.5,15Z"/><path class="qf" d="M9.65,5.241a1,1,0,0,0-1.409.108L6,7.964,3.759,5.349A1,1,0,0,0,2.192,6.59178Q2.21541,6.6213,2.241,6.649L4.684,9.5,2.241,12.35A1,1,0,0,0,3.71,13.70722q0.02557-.02768.049-0.05722L6,11.036,8.241,13.65a1,1,0,1,0,1.567-1.24277Q9.78459,12.3777,9.759,12.35L7.316,9.5,9.759,6.651A1,1,0,0,0,9.65,5.241Z"/></svg>
<svg class="qi" style="left:854.75px;top:911.15px" viewBox="0 0 18 18"><path class="qf" d="M15.5,7H13.861a4.015,4.015,0,0,0,1.914-2.975,1.8,1.8,0,0,0-1.6-1.751A1.922,1.922,0,0,0,12.021,3.7a0.5,0.5,0,1,0,.957.291,0.917,0.917,0,0,1,1.053-.725,0.81,0.81,0,0,1,.744.762c0,1.077-1.164,1.925-1.934,2.486A1.423,1.423,0,0,0,12,7.5a0.5,0.5,0,0,0,.5.5h3A0.5,0.5,0,0,0,15.5,7Z"/><path class="qf" d="M9.651,5.241a1,1,0,0,0-1.41.108L6,7.964,3.759,5.349a1,1,0,1,0-1.519,1.3L4.683,9.5,2.241,12.35a1,1,0,1,0,1.519,1.3L6,11.036,8.241,13.65a1,1,0,0,0,1.519-1.3L7.317,9.5,9.759,6.651A1,1,0,0,0,9.651,5.241Z"/></svg>
<svg class="qi" style="left:893.35px;top:911.15px" viewBox="0 0 18 18"><line class="qs" x1="3" x2="15" y1="14" y2="14"/><line class="qs" x1="3" x2="15" y1="4" y2="4"/><line class="qs" x1="9" x2="15" y1="9" y2="9"/><polyline class="qs" points="5 7 5 11 3 9 5 7"/></svg>
<svg class="qi" style="left:918.85px;top:911.15px" viewBox="0 0 18 18"><line class="qs" x1="3" x2="15" y1="14" y2="14"/><line class="qs" x1="3" x2="15" y1="4" y2="4"/><line class="qs" x1="9" x2="15" y1="9" y2="9"/><polyline class="qf qs" points="3 7 3 11 5 9 3 7"/></svg>
<svg class="qi" style="left:1023.85px;top:911.15px" viewBox="0 0 18 18"><polygon class="qs" points="7 11 9 13 11 11 7 11"/><polygon class="qs" points="7 7 9 5 11 7 7 7"/></svg>
<svg class="qi" style="left:1124.95px;top:911.15px" viewBox="0 0 18 18"><polygon class="qs" points="7 11 9 13 11 11 7 11"/><polygon class="qs" points="7 7 9 5 11 7 7 7"/></svg>
<svg class="qi" style="left:1160.85px;top:911.15px" viewBox="0 0 18 18"><line class="qs" opacity=".4" x1="3" x2="15" y1="15" y2="15"/><polyline class="qs" points="5.5 11 9 3 12.5 11"/><line class="qs" x1="11.63" x2="6.38" y1="9" y2="9"/></svg>
<svg class="qi" style="left:1185.85px;top:911.15px" viewBox="0 0 18 18"><g class="qf" opacity=".75"><rect height="1" width="1" x="4" y="4"/><rect height="1" width="1" x="2" y="6"/><rect height="1" width="1" x="3" y="5"/><rect height="1" width="1" x="4" y="7"/><rect height="1" width="1" x="2" y="12"/><rect height="1" width="1" x="2" y="9"/><rect height="1" width="1" x="2" y="15"/><rect height="1" width="1" x="3" y="8"/><rect height="1" width="1" x="12" y="2"/><rect height="1" width="1" x="11" y="3"/><rect height="1" width="1" x="2" y="3"/><rect height="1" width="1" x="6" y="2"/><rect height="1" width="1" x="3" y="2"/><rect height="1" width="1" x="5" y="3"/><rect height="1" width="1" x="9" y="2"/><rect height="1" width="1" x="15" y="14"/><rect height="1" width="1" x="13" y="7"/><rect height="1" width="1" x="15" y="5"/><rect height="1" width="1" x="14" y="6"/><rect height="1" width="1" x="15" y="8"/><rect height="1" width="1" x="14" y="9"/><rect height="1" width="1" x="14" y="3"/><rect height="1" width="1" x="15" y="2"/><rect height="1" width="1" x="12" y="5"/><rect height="1" width="1" x="13" y="4"/><rect height="1" width="1" x="9" y="14"/><rect height="1" width="1" x="8" y="15"/><rect height="1" width="1" x="5" y="15"/><rect height="1" width="1" x="11" y="15"/><rect height="1" width="1" x="14" y="15"/><rect height="1" width="1" x="15" y="11"/><rect height="1" width="1" x="5" y="6"/><rect height="1" width="1" x="6" y="5"/><rect height="1" width="1" x="3" y="11"/><rect height="1" width="1" x="4" y="10"/><rect height="1" width="1" x="3" y="14"/><rect height="1" width="1" x="6" y="14"/><rect height="1" width="1" x="7" y="13"/><rect height="1" width="1" x="10" y="13"/><rect height="1" width="1" x="14" y="12"/><rect height="1" width="1" x="13" y="10"/><rect height="1" width="1" x="12" y="8"/><rect height="1" width="1" x="11" y="6"/><rect height="1" width="1" x="8" y="3"/><rect height="1" width="1" x="7" y="4"/><rect height="1" width="1" x="10" y="4"/></g><polyline class="qs" points="5.5 13 9 5 12.5 13"/><line class="qs" x1="11.63" x2="6.38" y1="11" y2="11"/></svg>
<svg class="qi" style="left:1299.95px;top:911.15px" viewBox="0 0 18 18"><polygon class="qs" points="7 11 9 13 11 11 7 11"/><polygon class="qs" points="7 7 9 5 11 7 7 7"/></svg>
<svg class="qi" style="left:1334.95px;top:911.15px" viewBox="0 0 18 18"><line class="qs" x1="3" x2="15" y1="9" y2="9"/><line class="qs" x1="3" x2="13" y1="14" y2="14"/><line class="qs" x1="3" x2="9" y1="4" y2="4"/></svg>
<svg class="qi" style="left:1374.45px;top:911.15px" viewBox="0 0 18 18"><line class="qs" x1="5" x2="13" y1="3" y2="3"/><line class="qs" x1="6" x2="9.35" y1="12" y2="3"/><line class="qs" x1="11" x2="15" y1="11" y2="15"/><line class="qs" x1="15" x2="11" y1="11" y2="15"/><rect class="qf" height="1" rx="0.5" ry="0.5" width="7" x="2" y="14"/></svg>
<svg class="qi" style="left:523.95px;top:932.95px" viewBox="0 0 18 18"><line class="qs" x1="7" x2="11" y1="7" y2="11"/><path class="qs" d="M8.9,4.577a3.476,3.476,0,0,1,.36,4.679A3.476,3.476,0,0,1,4.577,8.9C3.185,7.5,2.035,6.4,4.217,4.217S7.5,3.185,8.9,4.577Z"/><path class="qs" d="M13.423,9.1a3.476,3.476,0,0,0-4.679-.36,3.476,3.476,0,0,0,.36,4.679c1.392,1.392,2.5,2.542,4.679.36S14.815,10.5,13.423,9.1Z"/></svg>
<svg class="qi" style="left:548.95px;top:932.95px" viewBox="0 0 18 18"><rect class="qs" height="10" width="12" x="3" y="4"/><circle class="qf" cx="6" cy="7" r="1"/><polyline class="qf" fill-rule="evenodd" points="5 12 5 11 7 9 8 10 11 7 13 9 13 12 5 12"/></svg>
<svg class="qi" style="left:574.05px;top:932.95px" viewBox="0 0 18 18"><rect class="qs" height="12" width="12" x="3" y="3"/><rect class="qf" height="12" width="1" x="5" y="3"/><rect class="qf" height="12" width="1" x="12" y="3"/><rect class="qf" height="2" width="8" x="5" y="8"/><rect class="qf" height="1" width="3" x="3" y="5"/><rect class="qf" height="1" width="3" x="3" y="7"/><rect class="qf" height="1" width="3" x="3" y="10"/><rect class="qf" height="1" width="3" x="3" y="12"/><rect class="qf" height="1" width="3" x="12" y="5"/><rect class="qf" height="1" width="3" x="12" y="7"/><rect class="qf" height="1" width="3" x="12" y="10"/><rect class="qf" height="1" width="3" x="12" y="12"/></svg>
<div class="ql" style="left:961.6px">14px</div>
<div class="ql" style="left:1063.2px">文本</div>
<div class="ql" style="left:1228.5px">标准字体</div>

<svg class="abs" style="left:934px;top:246.5px;z-index:50" width="15" height="23" viewBox="-1.5 -1.5 15 23"><path d="M0 0 L0 16.6 L4 12.9 L6.7 18.9 L9.4 17.7 L6.9 11.9 L11.8 11.9 Z" fill="#fff" stroke="#111" stroke-width="1.1" stroke-linejoin="round"/></svg>
<!--SCROLL-->
<div class="abs" style="left:1903px;top:0;width:17px;height:952px;background:#f1f1f1;z-index:40">
  <div class="abs" style="left:2px;top:266px;width:13px;height:391px;background:#c1c1c1"></div>
  <div class="abs" style="left:5px;top:7px;width:0;height:0;border-left:3.5px solid transparent;border-right:3.5px solid transparent;border-bottom:4px solid #505050"></div>
  <div class="abs" style="left:5px;top:942px;width:0;height:0;border-left:3.5px solid transparent;border-right:3.5px solid transparent;border-top:4px solid #505050"></div>
</div>

</div>
</body>
</html>
